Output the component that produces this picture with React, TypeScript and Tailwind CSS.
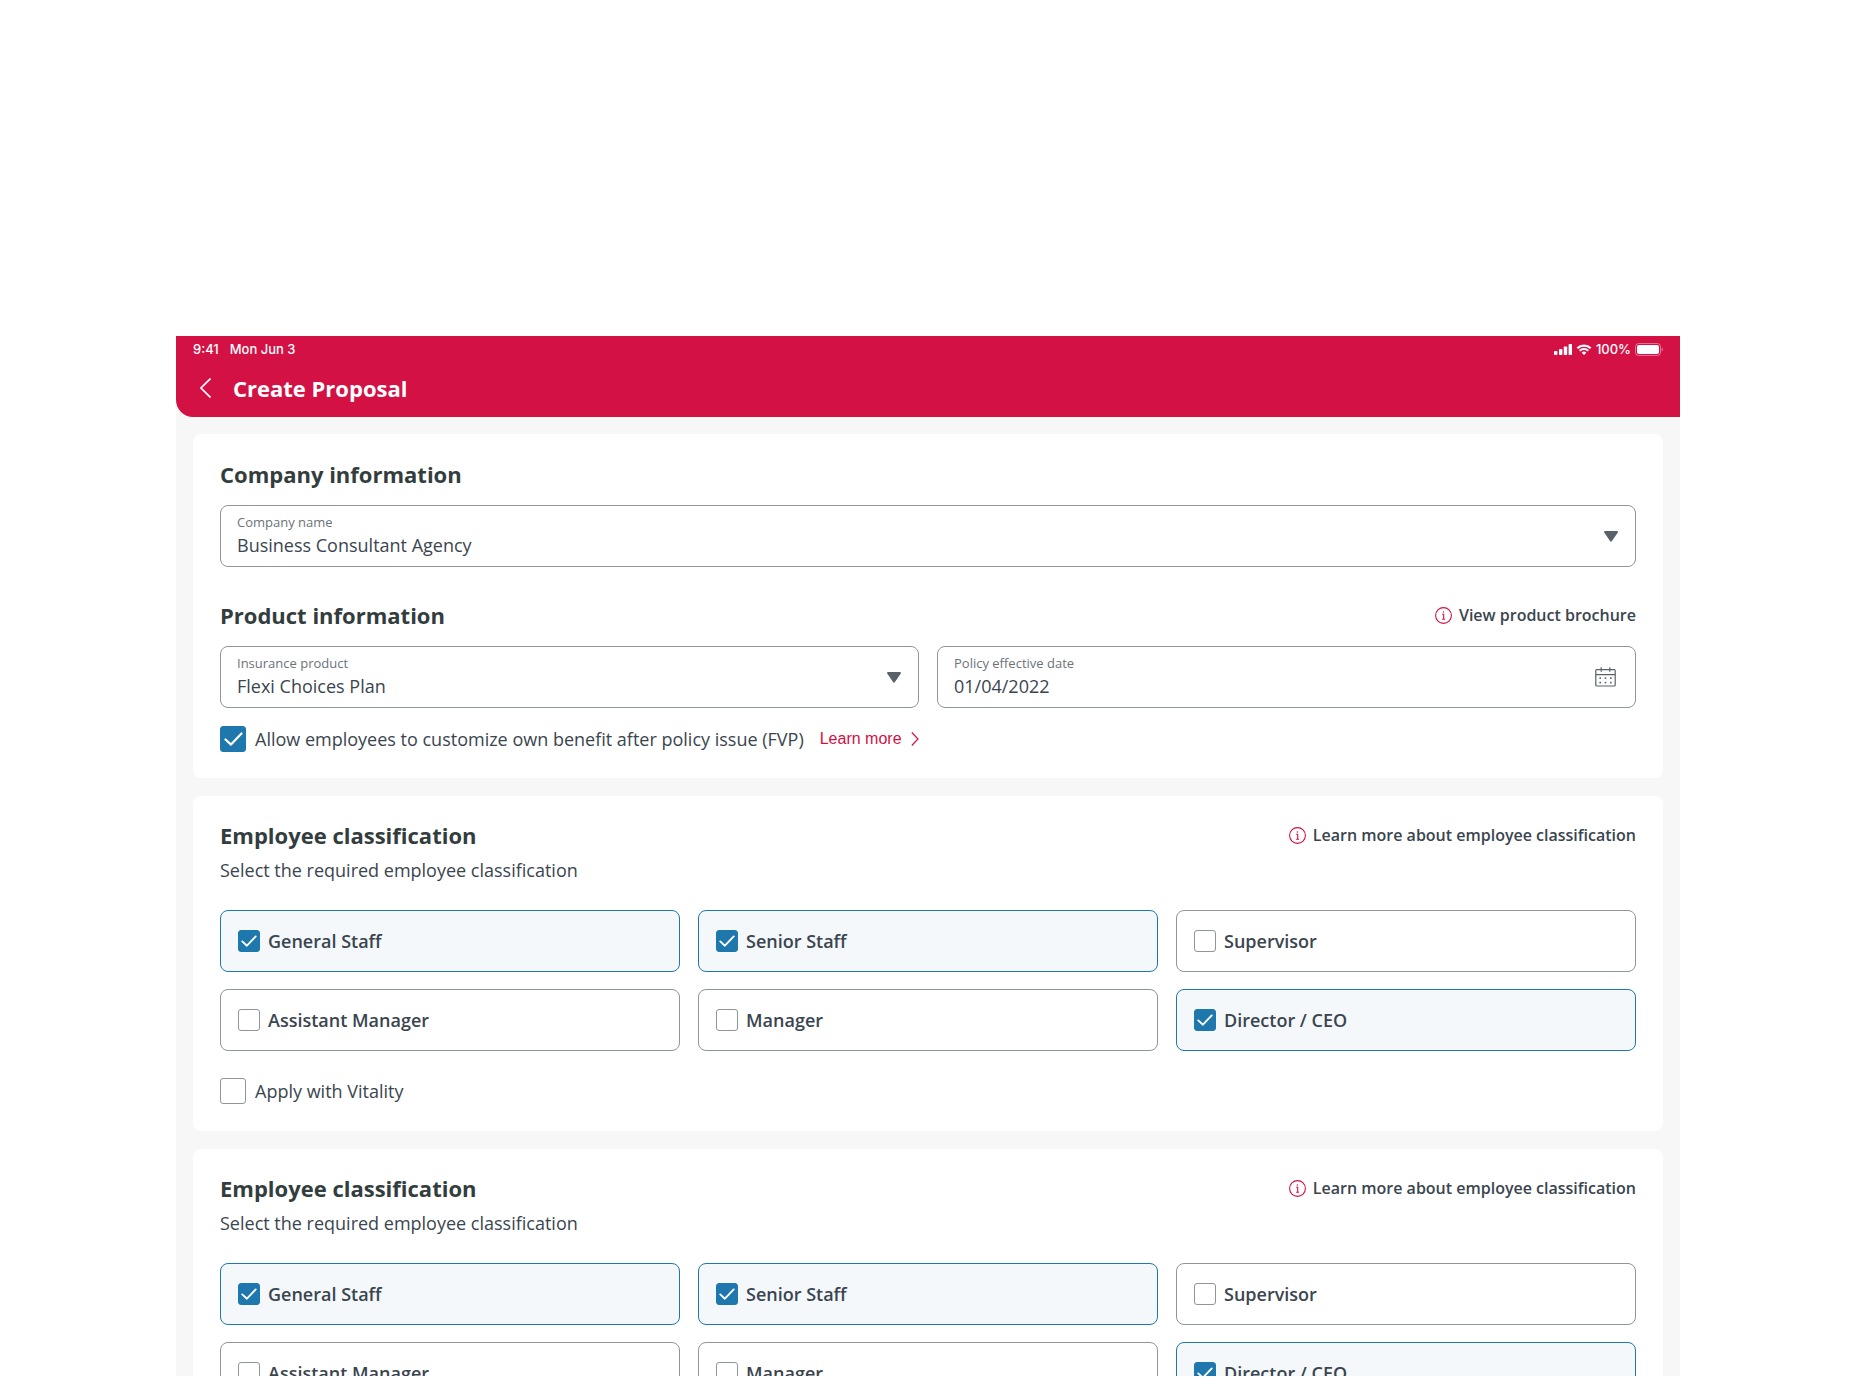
import React, { useId, useState } from "react";
import clsx from "clsx";

const classifications: string[] = [
  "General Staff",
  "Senior Staff",
  "Supervisor",
  "Assistant Manager",
  "Manager",
  "Director / CEO",
];

const SignalIcon = () => (
  <svg className="w-[18px] h-[11px]" viewBox="0 0 18 11" fill="currentColor" aria-hidden="true">
    <rect x="0" y="7" width="3.4" height="4" rx="0.8" />
    <rect x="5" y="5" width="3.4" height="6" rx="0.8" />
    <rect x="9.8" y="2.5" width="3.4" height="8.5" rx="0.8" />
    <rect x="14.6" y="0" width="3.4" height="11" rx="0.8" />
  </svg>
);

const WifiIcon = () => (
  <svg className="w-[16px] h-[11px]" viewBox="0 0 15 11" fill="none" stroke="currentColor" strokeWidth="2.1" aria-hidden="true">
    <path d="M0.8 4.3a9.6 9.6 0 0 1 13.4 0" />
    <path d="M3.2 6.8a6.2 6.2 0 0 1 8.6 0" />
    <path d="M7.5 11 5.2 8.7a3.3 3.3 0 0 1 4.6 0Z" fill="currentColor" stroke="none" />
  </svg>
);

const BatteryIcon = () => (
  <svg className="w-[28px] h-[13px]" viewBox="0 0 28 13" fill="none" aria-hidden="true">
    <rect x="0.5" y="0.5" width="25" height="12" rx="3.2" stroke="white" strokeOpacity="0.4" />
    <rect x="2" y="2" width="22" height="9" rx="2" fill="white" />
    <path d="M26.6 4.5v4c.9-.4 1.4-1.2 1.4-2s-.5-1.6-1.4-2Z" fill="white" fillOpacity="0.4" />
  </svg>
);

const InfoIcon = () => (
  <svg className="w-[17px] h-[17px]" viewBox="0 0 17 17" fill="none" stroke="#D31145" strokeWidth="1.1" aria-hidden="true">
    <circle cx="8.5" cy="8.5" r="7.9" />
    <path d="M7.2 7.2h1.5v5M7.1 12.3h3" />
    <circle cx="8.4" cy="4.9" r="0.75" fill="#D31145" stroke="none" />
  </svg>
);

const ArrowDownIcon = () => (
  <svg className="w-[14px] h-[11px]" viewBox="0 0 14 11" fill="#596269" aria-hidden="true">
    <path d="M1 0h12c.8 0 1.2.8.8 1.4l-6 8.9c-.4.6-1.2.6-1.6 0l-6-8.9C-.2.8.2 0 1 0Z" />
  </svg>
);

const CalendarIcon = () => (
  <svg className="w-[21px] h-[20px]" viewBox="0 0 21 20" fill="none" stroke="#596269" strokeWidth="1.2" aria-hidden="true">
    <rect x="0.8" y="2.6" width="19.4" height="16.4" rx="1" />
    <path d="M0.8 7.7h19.4M6.2 0.3v4.5M14.8 0.3v4.5" />
    <g fill="#596269" stroke="none">
      <rect x="4.4" y="10.3" width="1.6" height="1.6" />
      <rect x="9.7" y="10.3" width="1.6" height="1.6" />
      <rect x="15" y="10.3" width="1.6" height="1.6" />
      <rect x="4.4" y="14.8" width="1.6" height="1.6" />
      <rect x="9.7" y="14.8" width="1.6" height="1.6" />
      <rect x="15" y="14.8" width="1.6" height="1.6" />
    </g>
  </svg>
);

type CheckboxProps = {
  id: string;
  checked: boolean;
  onChange: () => void;
  small?: boolean;
};

const Checkbox = ({ id, checked, onChange, small }: CheckboxProps) => {
  return (
    <span className={clsx("grid shrink-0 place-items-center", small ? "size-[22px]" : "size-[26px]")}>
      <input
        id={id}
        type="checkbox"
        checked={checked}
        onChange={onChange}
        className="col-start-1 row-start-1 size-full appearance-none rounded-[3px] border border-[#8E959B] bg-white checked:border-[#1F78AD] checked:bg-[#1F78AD] cursor-pointer"
      />
      {checked && (
        <svg
          className={clsx("col-start-1 row-start-1 pointer-events-none", small ? "w-[16px] h-[12px]" : "w-[19px] h-[14px]")}
          viewBox="0 0 19 14"
          fill="none"
          stroke="white"
          strokeWidth="2.2"
          strokeLinecap="round"
          strokeLinejoin="round"
          aria-hidden="true"
        >
          <path d="M1.5 7.5 7 12.6 17.5 1.5" />
        </svg>
      )}
    </span>
  );
};

type SelectFieldProps = {
  label: string;
  options: string[];
};

const SelectField = ({ label, options }: SelectFieldProps) => {
  const id = useId();
  const [value, setValue] = useState<string>(options[0]);

  return (
    <div className="grid h-[62px] items-center rounded-lg border border-[#8E959B]">
      <div className="col-start-1 row-start-1 flex flex-col pb-0.5">
        <label htmlFor={id} className="px-4 text-[13px] leading-5 text-[#6B737A]">
          {label}
        </label>
        <select
          id={id}
          value={value}
          onChange={(e) => setValue(e.target.value)}
          className="w-full h-[26px] px-4 appearance-none bg-transparent text-lg leading-[26px] outline-none cursor-pointer"
        >
          {options.map((option) => (
            <option key={option}>{option}</option>
          ))}
        </select>
      </div>
      <span className="col-start-1 row-start-1 justify-self-end mr-[17px] pointer-events-none">
        <ArrowDownIcon />
      </span>
    </div>
  );
};

const DateField = ({ label }: { label: string }) => {
  const id = useId();
  const [date, setDate] = useState<string>("01/04/2022");

  return (
    <div className="flex h-[62px] items-center rounded-lg border border-[#8E959B] pl-4 pr-[19px]">
      <div className="flex flex-1 flex-col pb-0.5">
        <label htmlFor={id} className="text-[13px] leading-5 text-[#6B737A]">
          {label}
        </label>
        <input
          id={id}
          type="text"
          value={date}
          onChange={(e) => setDate(e.target.value)}
          className="w-full h-[26px] bg-transparent text-lg leading-[26px] outline-none"
        />
      </div>
      <button type="button" aria-label="Open calendar" className="cursor-pointer">
        <CalendarIcon />
      </button>
    </div>
  );
};

type SectionHeaderProps = {
  title: string;
  link?: string;
};

const SectionHeader = ({ title, link }: SectionHeaderProps) => (
  <div className="flex h-[30px] items-center justify-between">
    <h2 className="text-[22px] leading-[30px] font-bold text-[#333D3E]">{title}</h2>
    {link && (
      <a href="#" className="flex items-center gap-[7px] text-base leading-5 font-semibold">
        <InfoIcon />
        {link}
      </a>
    )}
  </div>
);

const ClassificationCard = () => {
  const id = useId();
  const [selected, setSelected] = useState<string[]>(["General Staff", "Senior Staff", "Director / CEO"]);
  const [vitality, setVitality] = useState<boolean>(false);

  const toggle = (name: string) => {
    setSelected(selected.includes(name) ? selected.filter((item) => item !== name) : [...selected, name]);
  };

  return (
    <section className="rounded-lg bg-white px-[27px] pt-6 pb-[27px]">
      <SectionHeader title="Employee classification" link="Learn more about employee classification" />
      <p className="mt-2 text-lg leading-6">Select the required employee classification</p>
      <div className="mt-7 grid grid-cols-3 gap-x-[18px] gap-y-[17px]">
        {classifications.map((name) => (
          <label
            key={name}
            htmlFor={`${id}-${name}`}
            className={clsx(
              "flex h-[62px] items-center gap-2 rounded-lg border px-[17px] text-lg font-semibold cursor-pointer",
              selected.includes(name) ? "border-[#1F78AD] bg-[#F4F8FB]" : "border-[#8E959B] bg-white"
            )}
          >
            <Checkbox
              id={`${id}-${name}`}
              small
              checked={selected.includes(name)}
              onChange={() => toggle(name)}
            />
            {name}
          </label>
        ))}
      </div>
      <label htmlFor={`${id}-vitality`} className="mt-[27px] flex h-[26px] w-fit items-center gap-[9px] text-lg cursor-pointer">
        <Checkbox id={`${id}-vitality`} checked={vitality} onChange={() => setVitality(!vitality)} />
        Apply with Vitality
      </label>
    </section>
  );
};

const App = (): React.JSX.Element => {
  const [customize, setCustomize] = useState<boolean>(true);

  return (
    <div className="flex h-screen flex-col bg-white pt-84 pr-[174px] pb-[15px] pl-44 font-['Open_Sans',sans-serif] text-[#3A454F]">
      <div className="flex min-h-0 flex-1 flex-col overflow-hidden bg-[#F7F7F7]">
        <header className="h-[81px] shrink-0 rounded-bl-[17px] bg-[#D31145] text-white">
          <div className="flex h-[27px] items-center justify-between px-[17px] font-[Inter,sans-serif] text-[13px] font-medium">
            <div className="flex gap-[11px]">
              <span>9:41</span>
              <span>Mon Jun 3</span>
            </div>
            <div className="flex items-center gap-1">
              <SignalIcon />
              <WifiIcon />
              <span>100%</span>
              <BatteryIcon />
            </div>
          </div>
          <div className="flex h-[50px] items-center gap-[22px] pl-6">
            <button type="button" aria-label="Back" className="cursor-pointer">
              <svg className="w-[11px] h-[20px]" viewBox="0 0 11 20" fill="none" stroke="white" strokeWidth="1.6" aria-hidden="true">
                <path d="M10.5 0.5 1 10l9.5 9.5" />
              </svg>
            </button>
            <h1 className="text-[22px] leading-[30px] font-bold">Create Proposal</h1>
          </div>
        </header>

        <main className="flex flex-col gap-[18px] p-[17px]">
          <section className="rounded-lg bg-white px-[27px] pt-[25px] pb-[26px]">
            <SectionHeader title="Company information" />
            <div className="mt-4">
              <SelectField label="Company name" options={["Business Consultant Agency"]} />
            </div>
            <div className="mt-[33px]">
              <SectionHeader title="Product information" link="View product brochure" />
            </div>
            <div className="mt-4 grid grid-cols-2 gap-[18px]">
              <SelectField label="Insurance product" options={["Flexi Choices Plan"]} />
              <DateField label="Policy effective date" />
            </div>
            <div className="mt-[18px] flex h-[26px] items-center gap-4">
              <label htmlFor="customize" className="flex items-center gap-[9px] text-lg cursor-pointer">
                <Checkbox id="customize" checked={customize} onChange={() => setCustomize(!customize)} />
                Allow employees to customize own benefit after policy issue (FVP)
              </label>
              <a href="#" className="flex items-center gap-[9px] font-['Liberation_Sans',sans-serif] text-base text-[#D31145]">
                Learn more
                <svg className="w-[8px] h-[14px]" viewBox="0 0 8 14" fill="none" stroke="currentColor" strokeWidth="1.2" aria-hidden="true">
                  <path d="M0.8 0.5 7 7 0.8 13.5" />
                </svg>
              </a>
            </div>
          </section>

          <ClassificationCard />
          <ClassificationCard />
        </main>
      </div>
    </div>
  );
};

export default App;
